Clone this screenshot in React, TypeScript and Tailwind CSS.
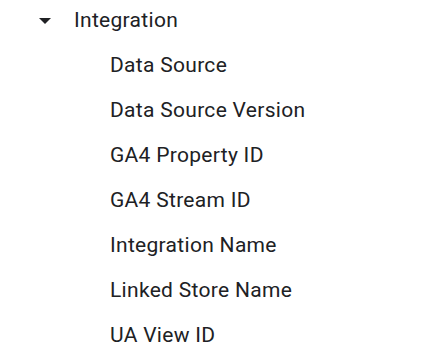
import React from "react";

const items = [
  "Data Source",
  "Data Source Version",
  "GA4 Property ID",
  "GA4 Stream ID",
  "Integration Name",
  "Linked Store Name",
  "UA View ID",
];

export default function App() {
  return (
    <div
      className="w-[444px] h-[352px] bg-white text-[#202124] overflow-hidden"
      style={{ fontFamily: "Roboto, 'Liberation Sans', sans-serif" }}
    >
      <div className="flex items-center h-[45px] -mt-[2px] pl-[39px]">
        <svg width="12" height="6" viewBox="0 0 12 6" className="mr-[23px]">
          <path d="M0 0 L12 0 L6 6 Z" fill="#202124" />
        </svg>
        <span className="text-[21px] tracking-[0.3px]">Integration</span>
      </div>
      {items.map((t) => (
        <div
          key={t}
          className="flex items-center h-[45px] pl-[110px] text-[21px] tracking-[0.3px]"
        >
          {t}
        </div>
      ))}
    </div>
  );
}
